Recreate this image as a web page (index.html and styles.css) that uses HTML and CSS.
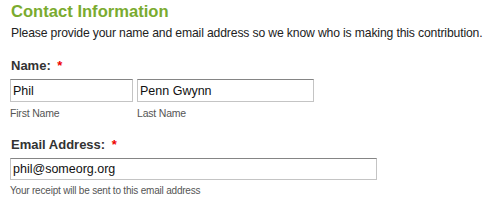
FILE: index.html
```html
<!DOCTYPE html>
<html>
<head>
  <title>Contact Information</title>
  <link rel="stylesheet" href="styles.css">
</head>
<body>
  <div class="section">
    <h2>Contact Information</h2>
    <p class="intro">Please provide your name and email address so we know who is making this contribution.</p>

    <div class="field">
      <label>Name: <span class="required">*</span></label>
      <div class="name-row">
        <div class="name-part">
          <input type="text" class="first-name" value="Phil">
          <span class="hint">First Name</span>
        </div>
        <div class="name-part">
          <input type="text" class="last-name" value="Penn Gwynn">
          <span class="hint">Last Name</span>
        </div>
      </div>
    </div>

    <div class="field">
      <label for="email">Email Address: <span class="required">*</span></label>
      <input type="email" id="email" class="email" value="phil@someorg.org">
      <span class="hint small">Your receipt will be sent to this email address</span>
    </div>
  </div>
</body>
</html>
```

FILE: styles.css
```css
body {
  font-family: "Liberation Sans", Arial, sans-serif;
  color: #222;
  background-color: white;
  margin: 0;
  padding: 0 10px;
}

h2 {
  color: #7aab2f;
  font-size: 16.6px;
  line-height: 20px;
  margin: 2px 0 0 1px;
}

.intro {
  font-size: 12.2px;
  letter-spacing: -0.15px;
  line-height: 16px;
  white-space: nowrap;
  margin: 3px 0 0 1px;
}

.field {
  margin-top: 17px;
}

.field label {
  display: block;
  font-size: 13px;
  font-weight: bold;
  line-height: 16px;
  color: #333;
  margin: 0 0 5px 1px;
}

.required {
  color: #e00;
  margin-left: 3px;
}

.name-row {
  display: flex;
  gap: 4px;
}

.name-part {
  display: flex;
  flex-direction: column;
}

input {
  font-family: "Liberation Sans", Arial, sans-serif;
  font-size: 12.5px;
  color: #111;
  height: 23px;
  padding: 0 2px;
  border: 1px solid #c4c4c4;
  border-top-color: #858585;
  box-sizing: border-box;
  margin: 0;
  outline: none;
}

.first-name {
  width: 123px;
}

.last-name {
  width: 177px;
}

.email {
  display: block;
  width: 367px;
  height: 22px;
}

.hint {
  display: block;
  font-size: 10.5px;
  letter-spacing: -0.2px;
  line-height: 13px;
  color: #555;
  margin-top: 5px;
}

.hint.small {
  font-size: 10px;
  margin-top: 4px;
}
```
